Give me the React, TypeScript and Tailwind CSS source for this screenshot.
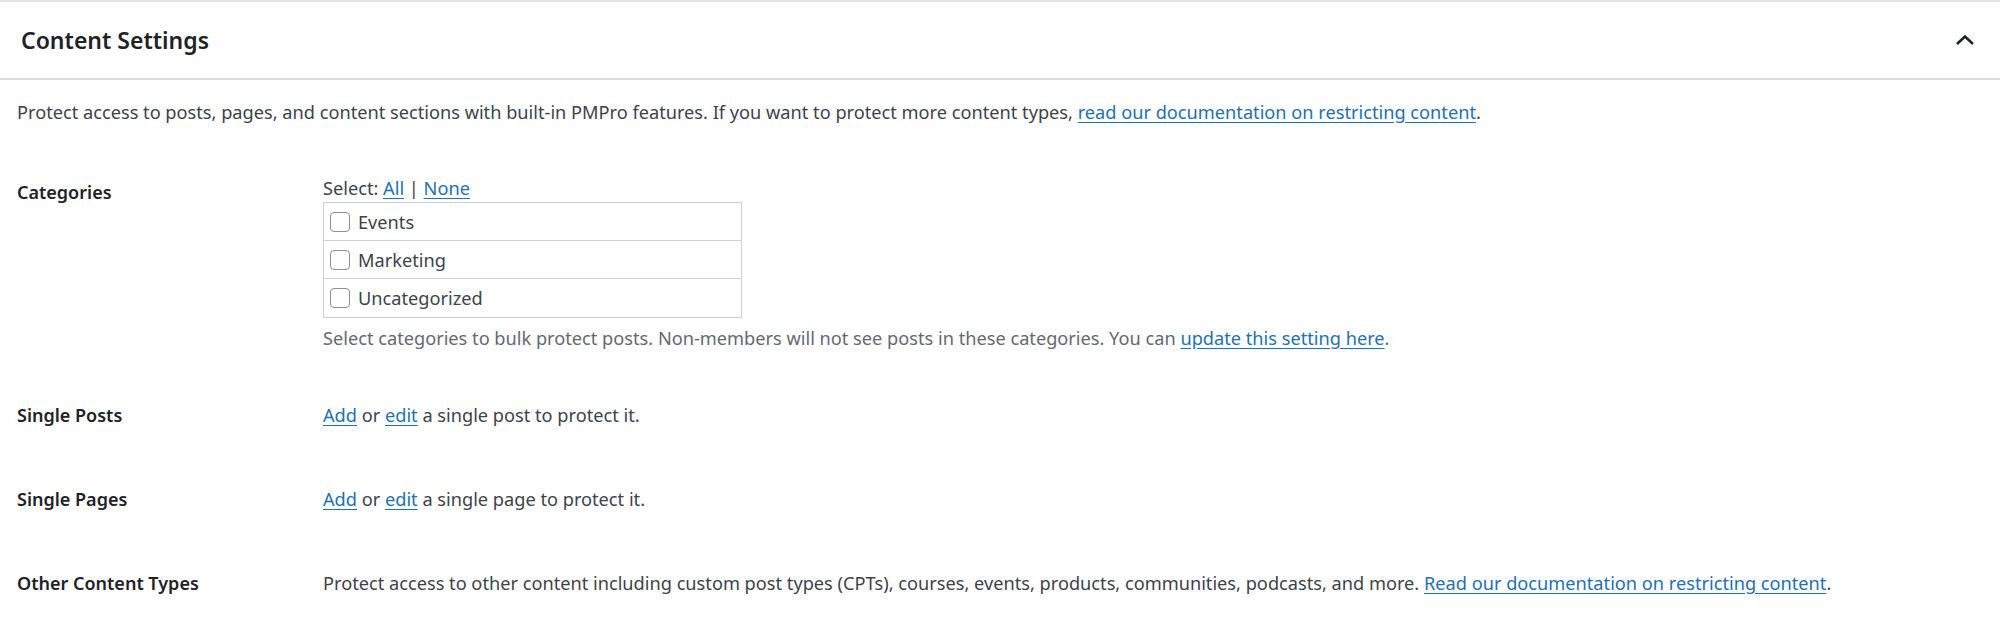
import React from 'react';

const font = { fontFamily: '"Noto Sans", "Open Sans", Arial, sans-serif' };

const categories = ['Events', 'Marketing', 'Uncategorized'];

function A({ children }: { children: React.ReactNode }) {
  return (
    <a href="#" className="text-[#2271b1] underline underline-offset-[3px]">
      {children}
    </a>
  );
}

function Row({
  label,
  className,
  labelClass = '',
  children,
}: {
  label: string;
  className: string;
  labelClass?: string;
  children: React.ReactNode;
}) {
  return (
    <div className={`flex ${className}`}>
      <div className={`w-[306px] shrink-0 text-[18px] font-semibold leading-[24px] text-[#1d2327] ${labelClass}`}>{label}</div>
      <div className="flex-1 text-[18.2px] leading-[24px] text-[#3c434a]">{children}</div>
    </div>
  );
}

export default function App() {
  return (
    <div style={font} className="h-[640px] w-[2000px] overflow-hidden border-t-2 border-[#e4e4e4] bg-white">
      <div className="flex h-[78px] items-center justify-between border-b-2 border-[#dcdcde] pl-[21px] pr-[25px]">
        <h2 className="text-[23px] font-semibold text-[#1d2327]">Content Settings</h2>
        <svg width="20" height="12" viewBox="0 0 20 12">
          <path d="M2 10 L10 2.5 L18 10" fill="none" stroke="#1d2327" strokeWidth="2.6" />
        </svg>
      </div>

      <div className="px-[17px]">
        <p className="mt-[19px] text-[18.2px] leading-[26px] text-[#3c434a]">
          Protect access to posts, pages, and content sections with built-in PMPro features. If you want to protect more
          content types, <A>read our documentation on restricting content</A>.
        </p>

        <Row label="Categories" className="mt-[51px]" labelClass="pt-[4px]">
          <div>
            Select: <A>All</A> | <A>None</A>
          </div>
          <div className="mt-[2px] w-[419px] border border-[#cfd0d2]">
            {categories.map((c, i) => (
              <label
                key={c}
                className={`flex h-[38px] items-center gap-[8px] pl-[6px] ${i < categories.length - 1 ? 'border-b border-[#cfd0d2]' : ''}`}
              >
                <span className="h-[20px] w-[20px] rounded-[4px] border border-[#8c8f94] bg-white" />
                <span>{c}</span>
              </label>
            ))}
          </div>
          <p className="mt-[8px] text-[#646970]">
            Select categories to bulk protect posts. Non-members will not see posts in these categories. You can{' '}
            <A>update this setting here</A>.
          </p>
        </Row>

        <Row label="Single Posts" className="mt-[53px]">
          <A>Add</A> or <A>edit</A> a single post to protect it.
        </Row>

        <Row label="Single Pages" className="mt-[60px]">
          <A>Add</A> or <A>edit</A> a single page to protect it.
        </Row>

        <Row label="Other Content Types" className="mt-[60px]">
          Protect access to other content including custom post types (CPTs), courses, events, products, communities,
          podcasts, and more. <A>Read our documentation on restricting content</A>.
        </Row>
      </div>
    </div>
  );
}
